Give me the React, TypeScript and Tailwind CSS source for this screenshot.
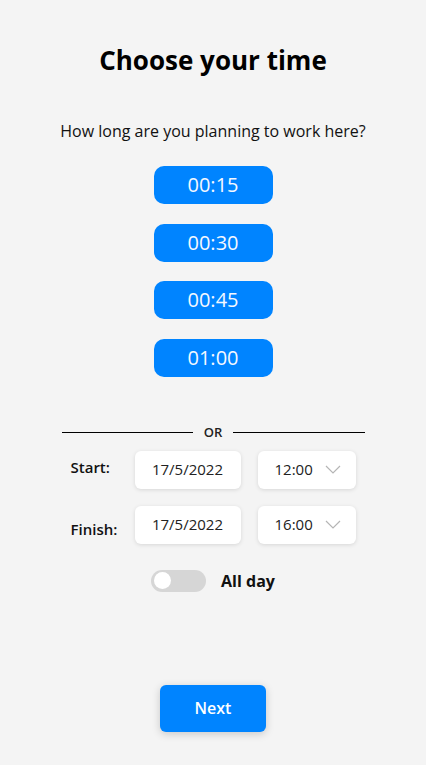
import React from "react";

const font = { fontFamily: '"Open Sans", "Noto Sans", sans-serif' };

function Chevron() {
  return (
    <svg width="16" height="9" viewBox="0 0 16 9" fill="none" className="ml-[12px]">
      <path d="M1 1l7 7 7-7" stroke="#b5b5b5" strokeWidth="1.2" />
    </svg>
  );
}

function Row({ label, date, time, labelOffset }: { label: string; date: string; time: string; labelOffset: string }) {
  return (
    <div className="flex w-[303px] items-center px-[9px]">
      <div className={`w-[64px] text-[15px] font-semibold text-[#111] ${labelOffset}`}>{label}</div>
      <div className="flex h-[38px] w-[106px] items-center justify-center rounded-[6px] bg-white text-[15px] text-[#222] shadow-[0_1px_4px_rgba(0,0,0,0.12)]">
        {date}
      </div>
      <div className="ml-[17px] flex h-[38px] w-[98px] items-center rounded-[6px] bg-white pl-[17px] text-[15px] text-[#222] shadow-[0_1px_4px_rgba(0,0,0,0.12)]">
        {time}
        <Chevron />
      </div>
    </div>
  );
}

export default function App() {
  const times = ["00:15", "00:30", "00:45", "01:00"];
  return (
    <div style={font} className="flex min-h-[765px] w-full flex-col items-center bg-[#f4f4f4]">
      <h1 className="mt-[42px] text-[26px] font-bold leading-[36px] text-black">Choose your time</h1>
      <p className="mt-[43px] text-[16px] font-medium leading-[20px] text-[#111]">
        How long are you planning to work here?
      </p>
      <div className="mt-[25px] flex flex-col gap-[19.5px]">
        {times.map((t) => (
          <button
            key={t}
            className="flex h-[38px] w-[119px] items-center justify-center rounded-[10px] bg-[#0084ff] text-[20px] font-normal text-[#f4f8ff]"
          >
            {t}
          </button>
        ))}
      </div>
      <div className="mt-[46px] flex h-[20px] w-[303px] items-center">
        <div className="h-px flex-1 bg-black" />
        <span className="w-[40px] text-center text-[13px] font-semibold text-[#222]">OR</span>
        <div className="h-px flex-1 bg-black" />
      </div>
      <div className="mt-[8px] flex flex-col gap-[17px]">
        <Row label="Start:" date="17/5/2022" time="12:00" labelOffset="-mt-[4px]" />
        <Row label="Finish:" date="17/5/2022" time="16:00" labelOffset="mt-[10px]" />
      </div>
      <div className="mt-[25px] flex items-center gap-[15px]">
        <div className="flex h-[22px] w-[55px] items-center rounded-full bg-[#d6d6d6] px-[3px]">
          <div className="h-[17px] w-[17px] rounded-full bg-white" />
        </div>
        <span className="text-[16px] font-bold text-[#111]">All day</span>
      </div>
      <button className="mt-[92px] h-[47px] w-[106px] rounded-[6px] bg-[#0084ff] text-[16px] font-semibold text-white shadow-[0_2px_8px_rgba(0,0,0,0.18)]">
        Next
      </button>
    </div>
  );
}
